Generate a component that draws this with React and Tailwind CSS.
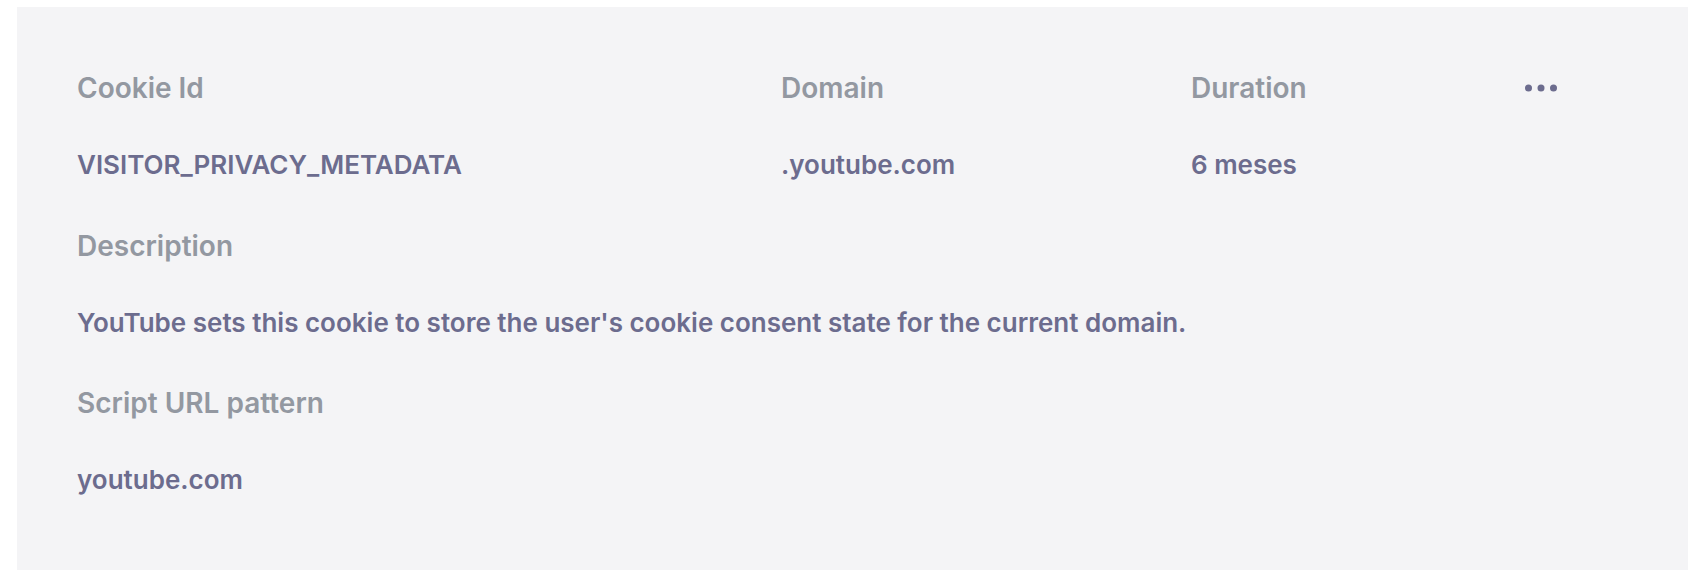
import React from 'react';

const cookie = {
  id: 'VISITOR_PRIVACY_METADATA',
  domain: '.youtube.com',
  duration: '6 meses',
  description: "YouTube sets this cookie to store the user's cookie consent state for the current domain.",
  pattern: 'youtube.com',
};

function Label({ children, className = '' }) {
  return (
    <div className={`h-[40px] text-[28px] leading-[40px] font-semibold text-[#9398a1] ${className}`}>
      {children}
    </div>
  );
}

function Value({ children, className = '' }) {
  return (
    <div className={`h-[36px] text-[26px] leading-[36px] font-semibold text-[#6c6c8e] ${className}`}>
      {children}
    </div>
  );
}

export default function App() {
  return (
    <div className="w-[1704px] h-[584px] bg-white font-['Inter',sans-serif] pt-[7px] pl-[17px] pr-[16px]">
      <div className="h-[563px] bg-[#f4f4f6] pt-[61px] px-[60px]">
        {/* Cookie row */}
        <div className="grid grid-cols-[704px_410px_334px_1fr]">
          <Label>Cookie Id</Label>
          <Label>Domain</Label>
          <Label>Duration</Label>
          <div className="h-[40px] flex items-center">
            <button className="flex items-center">
              <svg width="33" height="8" viewBox="0 0 33 8" fill="#6c6c8e">
                <circle cx="3.5" cy="4" r="3.5" />
                <circle cx="16" cy="4" r="3.5" />
                <circle cx="28.5" cy="4" r="3.5" />
              </svg>
            </button>
          </div>
          <Value className="mt-[39px]">{cookie.id}</Value>
          <Value className="mt-[39px]">{cookie.domain}</Value>
          <Value className="mt-[39px]">{cookie.duration}</Value>
          <div />
        </div>

        {/* Description */}
        <Label className="mt-[43px]">Description</Label>
        <Value className="mt-[39px]">{cookie.description}</Value>

        {/* Script URL pattern */}
        <Label className="mt-[42px]">Script URL pattern</Label>
        <Value className="mt-[39px]">{cookie.pattern}</Value>
      </div>
    </div>
  );
}
